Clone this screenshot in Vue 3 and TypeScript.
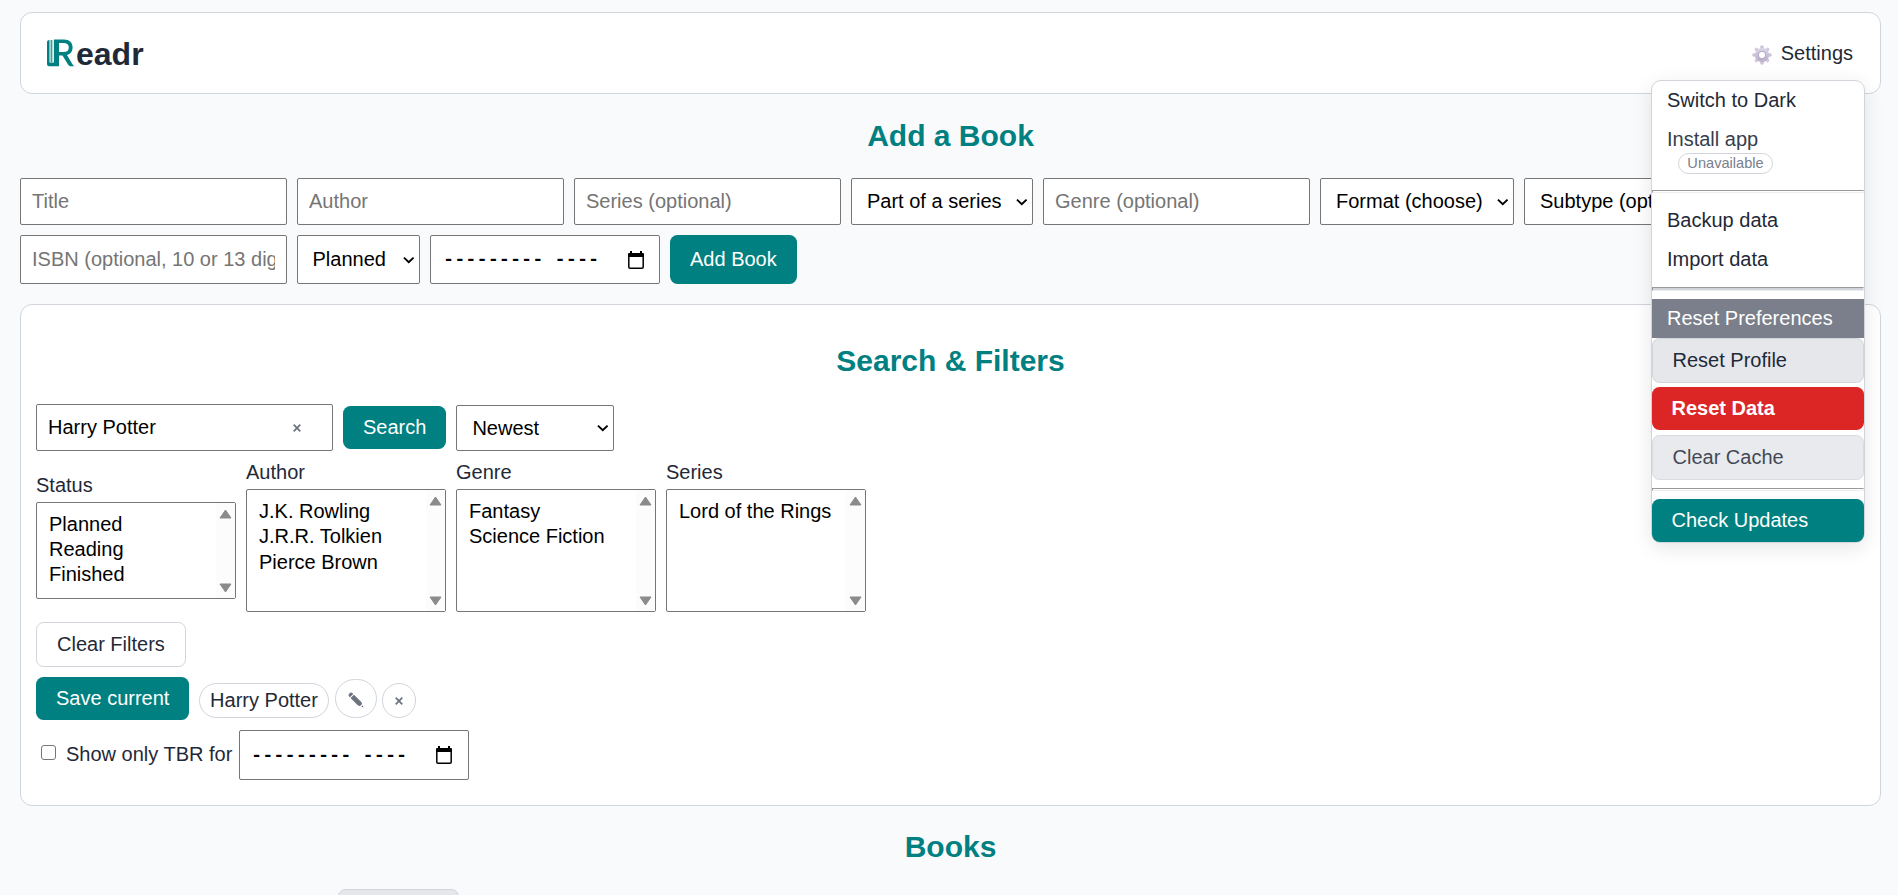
<script setup lang="ts">
import { ref } from 'vue'

interface FilterList {
  label: string
  options: string[]
  compact?: boolean
}

const query = ref('Harry Potter')
const onlyTbr = ref(false)

const filters: FilterList[] = [
  { label: 'Status', options: ['Planned', 'Reading', 'Finished'], compact: true },
  { label: 'Author', options: ['J.K. Rowling', 'J.R.R. Tolkien', 'Pierce Brown'] },
  { label: 'Genre', options: ['Fantasy', 'Science Fiction'] },
  { label: 'Series', options: ['Lord of the Rings'] },
]
</script>

<template>
  <div class="page">
    <header class="topbar">
      <div class="brand">
        <svg class="brand-mark" width="28" height="28" viewBox="0 0 28 28">
          <path d="M0 3Q0 1 2.500 1V23.500H7V.5H17C22.500 .5 25.600 3.500 25.600 8.500C25.600 12.500 23.500 15 20 16L25 24.500Q26 26.500 27.500 27.300H23.500Q22 27 21 25.500L15.500 16.500H12V27.300H2Q0 27.300 0 25Z" fill="#008080" />
          <path d="M12 4H16.500Q21.800 4 21.800 8.500Q21.800 13 16.500 13H12Z" fill="#fff" />
          <path d="M4.200 1V23" stroke="#008080" stroke-width="1.100" />
          <path d="M5.800 1V23" stroke="#008080" stroke-width=".7" opacity=".6" />
        </svg>
        <span class="brand-name">eadr</span>
      </div>
      <div class="settings">
        <svg width="20" height="20" viewBox="0 0 20 20">
          <defs>
            <linearGradient id="gear" x1="0" y1="0" x2="0" y2="1">
              <stop offset="0" stop-color="#d9d2e3" />
              <stop offset="1" stop-color="#bdb1cd" />
            </linearGradient>
          </defs>
          <g stroke-width="3.600" stroke-linecap="round">
            <path d="M10 2V4M10 16V18M2 10H4M16 10H18" stroke="#cdc4da" />
            <path d="M4.400 4.400L5.600 5.600M14.400 14.400L15.600 15.600M4.400 15.600L5.600 14.400M14.400 5.600L15.600 4.400" stroke="#d3cbdf" />
          </g>
          <circle cx="10" cy="10" r="5.200" fill="#fff" stroke="url(#gear)" stroke-width="3.800" />
          <circle cx="10" cy="10" r="3.700" fill="none" stroke="#b0a6be" stroke-width=".9" />
        </svg>
        <span>Settings</span>
      </div>
      <nav class="menu">
        <div class="item">Switch to Dark</div>
        <div class="item install">Install app<span class="badge">Unavailable</span></div>
        <hr />
        <div class="item">Backup data</div>
        <div class="item">Import data</div>
        <hr class="thick" />
        <div class="item active">Reset Preferences</div>
        <button class="btn soft">Reset Profile</button>
        <button class="btn danger">Reset Data</button>
        <button class="btn soft faded">Clear Cache</button>
        <hr />
        <button class="btn teal">Check Updates</button>
      </nav>
    </header>

    <h2 class="add-title">Add a Book</h2>
    <form class="add-form" @submit.prevent>
      <div class="row first">
        <input class="field" placeholder="Title" />
        <input class="field" placeholder="Author" />
        <input class="field" placeholder="Series (optional)" />
        <div class="select series"><span>Part of a series</span><svg class="chev" viewBox="0 0 12 8"><path d="M1 1.500L6 6.300L11 1.500" /></svg></div>
        <input class="field" placeholder="Genre (optional)" />
        <div class="select format"><span>Format (choose)</span><svg class="chev" viewBox="0 0 12 8"><path d="M1 1.500L6 6.300L11 1.500" /></svg></div>
        <div class="select subtype"><span>Subtype (optional)</span><svg class="chev" viewBox="0 0 12 8"><path d="M1 1.500L6 6.300L11 1.500" /></svg></div>
      </div>
      <div class="row second">
        <input class="field" placeholder="ISBN (optional, 10 or 13 digits)" />
        <div class="select planned"><span>Planned</span><svg class="chev" viewBox="0 0 12 8"><path d="M1 1.500L6 6.300L11 1.500" /></svg></div>
        <div class="month">
          <span>---------&nbsp;----</span>
          <svg class="cal" viewBox="0 0 16 18"><path d="M.8 3.500V16Q.8 17.200 2 17.200H14Q15.200 17.200 15.200 16V3.500" /><path class="solid" d="M0 3Q0 2 1 2H2V0H4V2H12V0H14V2H15Q16 2 16 3V6H0Z" /></svg>
        </div>
        <button class="btn teal add">Add Book</button>
      </div>
    </form>

    <section class="panel">
      <h2>Search &amp; Filters</h2>
      <div class="search-row">
        <div class="search-box">
          <input v-model="query" />
          <svg class="x" viewBox="0 0 8 8"><path d="M.7 .7L7.300 7.300M7.300 .7L.7 7.300" /></svg>
        </div>
        <button class="btn teal search">Search</button>
        <div class="select newest"><span>Newest</span><svg class="chev" viewBox="0 0 12 8"><path d="M1 1.500L6 6.300L11 1.500" /></svg></div>
      </div>
      <div class="lists">
        <div v-for="f in filters" :key="f.label" class="list" :class="{ compact: f.compact }">
          <label>{{ f.label }}</label>
          <div class="listbox">
            <ul>
              <li v-for="o in f.options" :key="o">{{ o }}</li>
            </ul>
            <div class="track">
              <svg viewBox="0 0 13 10"><path d="M6.500 1L12 9H1Z" /></svg>
              <svg viewBox="0 0 13 10"><path d="M6.500 9L12 1H1Z" /></svg>
            </div>
          </div>
        </div>
      </div>
      <button class="btn outline">Clear Filters</button>
      <div class="saved">
        <button class="btn teal save">Save current</button>
        <span class="chip">Harry Potter</span>
        <span class="chip edit">
          <svg width="16" height="16" viewBox="0 0 16 16"><path d="M1.400 1.400Q2.800 -.2 4.300 1L5.300 2L1.900 5.200L.9 4.200Q0 3 1.400 1.400Z" /><path d="M6 2.700L13.500 10.200L14 12.200L12 14L10 13.400L2.500 5.900Z" /><path d="M14.700 13.300L15.500 15.500L13.300 14.700Z" /></svg>
        </span>
        <span class="chip remove"><svg class="x" viewBox="0 0 8 8"><path d="M.7 .7L7.300 7.300M7.300 .7L.7 7.300" /></svg></span>
      </div>
      <div class="tbr">
        <input v-model="onlyTbr" type="checkbox" class="check" />
        <span class="tbr-label">Show only TBR for</span>
        <div class="month tall">
          <span>---------&nbsp;----</span>
          <svg class="cal" viewBox="0 0 16 18"><path d="M.8 3.500V16Q.8 17.200 2 17.200H14Q15.200 17.200 15.200 16V3.500" /><path class="solid" d="M0 3Q0 2 1 2H2V0H4V2H12V0H14V2H15Q16 2 16 3V6H0Z" /></svg>
        </div>
      </div>
    </section>

    <h2 class="books-title">Books</h2>
    <div class="books-bar"></div>
  </div>
</template>

<style>
body {
  margin: 0;
  background: #f9fafc;
}
</style>

<style scoped>
* {
  box-sizing: border-box;
}
.page {
  height: 895px;
  overflow: hidden;
  padding: 12px 17px 0 20px;
  font: 20px/23px "Liberation Sans", Arial, sans-serif;
  color: #1f2937;
  background: #f9fafc;
}
.topbar {
  position: relative;
  display: flex;
  justify-content: space-between;
  height: 82px;
  padding: 0 27px 0 26px;
  background: #fff;
  border: 1px solid #d1d5db;
  border-radius: 12px;
}
.brand {
  display: flex;
  padding-top: 26px;
}
.brand-name {
  margin: -3px 0 0 1px;
  font-size: 32px;
  line-height: 36px;
  font-weight: 700;
}
.settings {
  display: flex;
  gap: 9px;
  padding-top: 29px;
}
.settings svg {
  margin-top: 3px;
}
.menu {
  position: absolute;
  z-index: 5;
  top: 67px;
  right: 15px;
  width: 214px;
  height: 463px;
  background: #fff;
  border: 1px solid #d1d5db;
  border-radius: 10px;
  box-shadow: 0 5px 20px rgba(0, 0, 0, 0.1);
  white-space: nowrap;
}
.item {
  height: 39px;
  padding: 8px 15px;
}
.install {
  height: 62px;
  color: #353e4c;
}
.badge {
  display: block;
  width: 95px;
  height: 21px;
  margin: 2px 0 0 11px;
  border: 1px solid #d1d5db;
  border-radius: 11px;
  font-size: 14.600px;
  line-height: 19px;
  text-align: center;
  color: #7a808c;
}
.menu hr {
  height: 3px;
  margin: 8px 0;
  border: 1px solid #eee;
  border-top-color: #999;
  border-left-color: #999;
}
.menu hr.thick {
  height: 4px;
  background: #d1d5db;
}
.active {
  background: #7a7f8b;
  color: #fff;
}
.btn {
  display: block;
  border: 0;
  border-radius: 7.500px;
  padding: 0 20px;
  font: inherit;
  height: 43px;
  color: #fff;
  text-align: left;
  white-space: nowrap;
}
.menu .btn {
  width: 100%;
  padding-left: 19.500px;
}
.teal {
  background: #008080;
}
.btn.soft {
  height: 45px;
  background: #e5e7eb;
  border: 1px solid #d1d5db;
  color: #1f2937;
}
.btn.danger {
  margin: 4px 0 5px;
  background: #dc2626;
  font-weight: 700;
}
.btn.faded {
  opacity: 0.85;
}
h2 {
  margin: 0;
  text-align: center;
  font-size: 30px;
  line-height: 34px;
  color: #008080;
}
.add-title {
  margin: 25px 0;
}
.row {
  display: flex;
  gap: 10px;
}
.first {
  height: 47px;
}
.second {
  height: 49px;
  margin-top: 10px;
}
.field {
  flex: none;
  width: 267px;
  height: 100%;
  padding: 0 11px;
  font: inherit;
  border: 1px solid #767676;
  border-radius: 2px;
  background: #fff;
}
.field::placeholder {
  color: #757575;
  opacity: 1;
}
.select {
  display: flex;
  flex: none;
  align-items: center;
  justify-content: space-between;
  padding: 0 5px 0 15px;
  border: 1px solid #767676;
  border-radius: 2px;
  background: #fff;
  color: #000;
  white-space: nowrap;
}
.chev {
  width: 11.500px;
  height: 8px;
  fill: none;
  stroke: #000;
  stroke-width: 2;
}
.select.series {
  width: 182px;
}
.select.format {
  width: 194px;
}
.select.subtype {
  width: 214px;
}
.select.planned {
  width: 123px;
  padding-left: 14.500px;
}
.month {
  display: flex;
  align-items: center;
  justify-content: space-between;
  width: 230px;
  height: 49px;
  padding: 0 15px 0 12px;
  border: 1px solid #767676;
  border-radius: 2px;
  background: #fff;
  color: #000;
  font-family: "Liberation Mono", monospace;
  font-size: 18.600px;
}
.month span {
  padding-top: 2px;
  font-weight: 700;
}
.month.tall {
  height: 50px;
  padding: 0 16px 0 11px;
}
.cal {
  width: 16px;
  height: 18px;
  fill: none;
  stroke: #000;
  stroke-width: 1.500;
}
.cal .solid {
  fill: #000;
  stroke: none;
}
.add {
  height: 49px;
}
.panel {
  height: 502px;
  margin-top: 20px;
  padding: 39px 15px 0;
  background: #fff;
  border: 1px solid #d1d5db;
  border-radius: 12px;
}
.search-row {
  display: flex;
  gap: 10px;
  margin-top: 26px;
}
.search-box {
  display: flex;
  align-items: center;
  width: 297px;
  height: 47px;
  padding: 0 31px 0 11px;
  border: 1px solid #767676;
  border-radius: 2px;
}
.search-box input {
  flex: 1;
  min-width: 0;
  padding: 0;
  border: 0;
  outline: 0;
  font: inherit;
  color: #000;
}
.x {
  width: 8px;
  height: 8px;
  fill: none;
  stroke: #6b7280;
  stroke-width: 1.700;
}
.search {
  margin-top: 2px;
}
.newest {
  width: 158px;
  height: 46px;
  margin-top: 1px;
}
.lists {
  display: flex;
  align-items: flex-start;
  gap: 10px;
  margin-top: 10px;
}
.list {
  width: 200px;
}
.list.compact {
  padding-top: 13px;
}
.list label {
  display: block;
  height: 28px;
}
.listbox {
  display: flex;
  justify-content: space-between;
  height: 123px;
  border: 1px solid #767676;
  border-radius: 2px;
  color: #000;
}
.compact .listbox {
  height: 97px;
}
ul {
  margin: 0;
  padding: 9px 0 0 12px;
  list-style: none;
  line-height: 25.300px;
  white-space: nowrap;
}
.compact ul {
  line-height: 25px;
}
.track {
  display: flex;
  flex-direction: column;
  align-items: center;
  justify-content: space-between;
  width: 19px;
  padding: 6px 0 5px;
  background: #fcfcfc;
}
.track svg {
  width: 13px;
  height: 10px;
  fill: #8b8b8b;
  stroke: #8b8b8b;
  stroke-width: 1;
  stroke-linejoin: round;
}
.outline {
  width: 150px;
  height: 45px;
  margin-top: 10px;
  background: #fff;
  border: 1px solid #d1d5db;
  color: #1f2937;
}
.saved {
  display: flex;
  align-items: flex-start;
  height: 43px;
  margin-top: 10px;
}
.save {
  width: 153px;
}
.chip {
  display: flex;
  align-items: center;
  justify-content: center;
  width: 130px;
  height: 35px;
  margin: 6px 0 0 10px;
  border: 1px solid #d1d5db;
  border-radius: 20px;
}
.chip.edit {
  width: 42px;
  height: 39px;
  margin: 2px 0 0 6px;
}
.chip.edit svg {
  margin-top: 3px;
  fill: #6b7280;
}
.chip.remove {
  width: 34px;
  margin-left: 5px;
}
.tbr {
  display: flex;
  align-items: flex-start;
  margin-top: 10px;
}
.check {
  appearance: none;
  width: 15px;
  height: 15px;
  margin: 15px 0 0 5px;
  border: 1px solid #767676;
  border-radius: 3px;
  background: #fff;
}
.tbr-label {
  width: 173px;
  margin: 13px 0 0 10px;
  white-space: nowrap;
}
.books-title {
  margin-top: 24px;
}
.books-bar {
  width: 121px;
  height: 43px;
  margin: 25px 0 0 318px;
  background: #e5e7eb;
  border: 1px solid #d1d5db;
  border-radius: 7.500px;
}
</style>
